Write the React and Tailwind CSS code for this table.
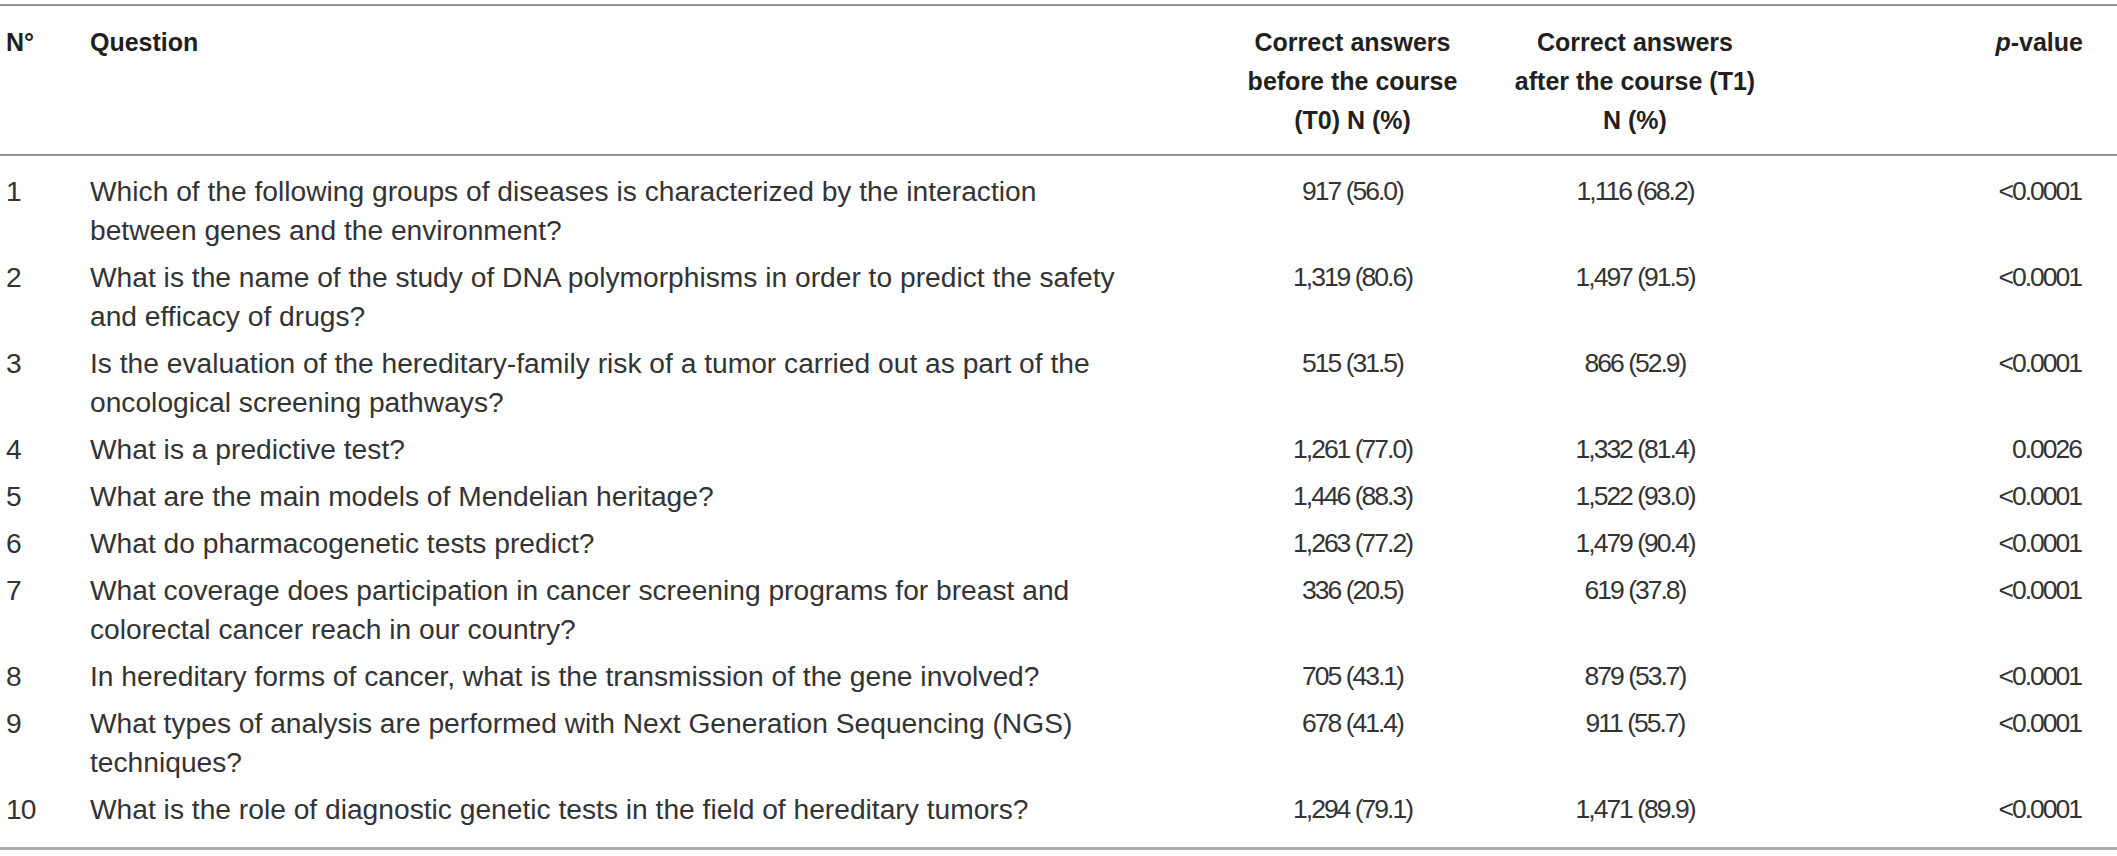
const ROWS = [
  { n: '1', q: ['Which of the following groups of diseases is characterized by the interaction', 'between genes and the environment?'], t0: '917 (56.0)', t1: '1,116 (68.2)', p: '<0.0001' },
  { n: '2', q: ['What is the name of the study of DNA polymorphisms in order to predict the safety', 'and efficacy of drugs?'], t0: '1,319 (80.6)', t1: '1,497 (91.5)', p: '<0.0001' },
  { n: '3', q: ['Is the evaluation of the hereditary-family risk of a tumor carried out as part of the', 'oncological screening pathways?'], t0: '515 (31.5)', t1: '866 (52.9)', p: '<0.0001' },
  { n: '4', q: ['What is a predictive test?'], t0: '1,261 (77.0)', t1: '1,332 (81.4)', p: '0.0026' },
  { n: '5', q: ['What are the main models of Mendelian heritage?'], t0: '1,446 (88.3)', t1: '1,522 (93.0)', p: '<0.0001' },
  { n: '6', q: ['What do pharmacogenetic tests predict?'], t0: '1,263 (77.2)', t1: '1,479 (90.4)', p: '<0.0001' },
  { n: '7', q: ['What coverage does participation in cancer screening programs for breast and', 'colorectal cancer reach in our country?'], t0: '336 (20.5)', t1: '619 (37.8)', p: '<0.0001' },
  { n: '8', q: ['In hereditary forms of cancer, what is the transmission of the gene involved?'], t0: '705 (43.1)', t1: '879 (53.7)', p: '<0.0001' },
  { n: '9', q: ['What types of analysis are performed with Next Generation Sequencing (NGS)', 'techniques?'], t0: '678 (41.4)', t1: '911 (55.7)', p: '<0.0001' },
  { n: '10', q: ['What is the role of diagnostic genetic tests in the field of hereditary tumors?'], t0: '1,294 (79.1)', t1: '1,471 (89.9)', p: '<0.0001' },
]

const GRID = 'grid grid-cols-[90px_1120px_285px_280px_1fr] pr-[34px]'
// numbers in the source are set narrower than the question text
const NUM = 'text-[26.5px] tracking-[-2px]'

export default function App() {
  return (
    <div className="w-[2117px] h-[856px] bg-white font-['Liberation_Sans',Arial,sans-serif] text-[#231f20]">
      <div className="pt-[4px]">
        {/* header */}
        <div className={`${GRID} border-t-2 border-b-2 border-[#929292] pt-[17px] pb-[14px] text-[25px] leading-[39px] font-bold`}>
          <div className="pl-[6px]">N°</div>
          <div>Question</div>
          <div className="text-center">Correct answers<br />before the course<br />(T0) N (%)</div>
          <div className="text-center">Correct answers<br />after the course (T1)<br />N (%)</div>
          <div className="text-right"><i>p</i>-value</div>
        </div>

        {/* body */}
        <div className="pt-[12px] pb-[14px] border-b-[3px] border-[#ababab] text-[28.2px] leading-[39px] text-[#333333]">
          {ROWS.map(r => (
            <div key={r.n} className={`${GRID} py-[4px]`}>
              <div className="pl-[6px] tracking-[-1px]">{r.n}</div>
              <div className="whitespace-nowrap">
                {r.q.map((line, i) => <div key={i}>{line}</div>)}
              </div>
              <div className={`text-center ${NUM}`}>{r.t0}</div>
              <div className={`text-center ${NUM}`}>{r.t1}</div>
              <div className={`text-right pr-[2px] ${NUM}`}>{r.p}</div>
            </div>
          ))}
        </div>
      </div>
    </div>
  )
}
